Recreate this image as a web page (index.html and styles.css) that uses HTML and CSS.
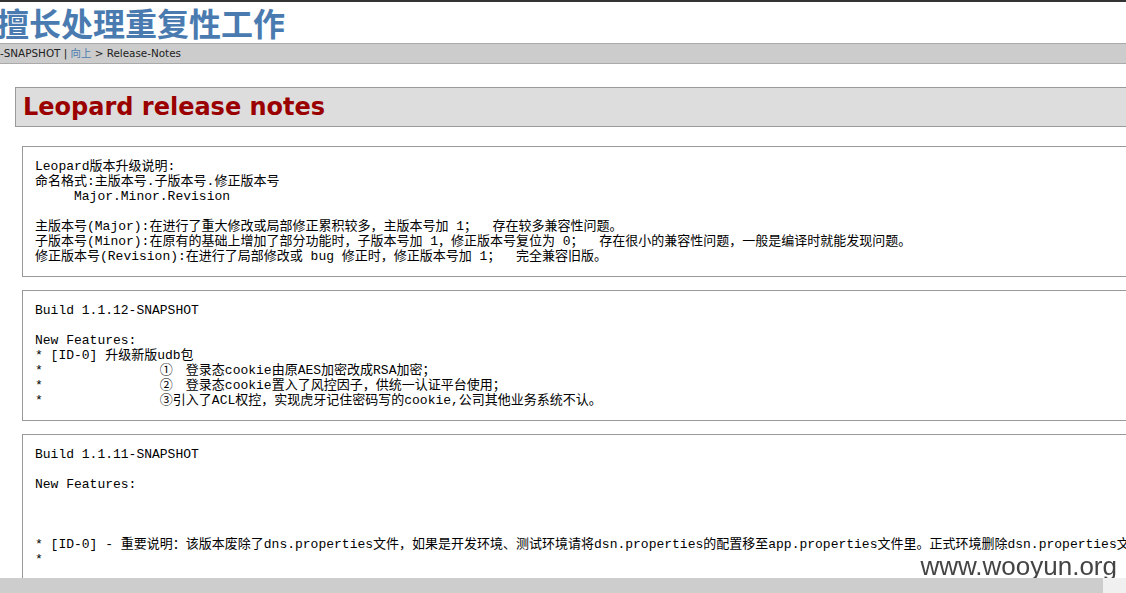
FILE: index.html
```html
<!DOCTYPE html>
<html lang="zh">
<head>
<meta charset="utf-8">
<title>Leopard release notes</title>
<link rel="stylesheet" href="styles.css">
</head>
<body>
<div class="page">
  <div class="topbar"></div>
  <h1 class="site-title">擅长处理重复性工作</h1>
  <div class="crumb">-SNAPSHOT | <a href="#">向上</a> &gt; Release-Notes</div>
  <div class="content">
    <div class="title-box"><h2>Leopard release notes</h2></div>
    <pre class="note">Leopard版本升级说明:
命名格式:主版本号.子版本号.修正版本号
     Major.Minor.Revision

主版本号(Major):在进行了重大修改或局部修正累积较多，主版本号加 1；  存在较多兼容性问题。
子版本号(Minor):在原有的基础上增加了部分功能时，子版本号加 1，修正版本号复位为 0；  存在很小的兼容性问题，一般是编译时就能发现问题。
修正版本号(Revision):在进行了局部修改或 bug 修正时，修正版本号加 1；  完全兼容旧版。</pre>
    <pre class="note">Build 1.1.12-SNAPSHOT

New Features:
* [ID-0] 升级新版udb包
*		①　登录态cookie由原AES加密改成RSA加密；
*		②　登录态cookie置入了风控因子，供统一认证平台使用；
*		③引入了ACL权控，实现虎牙记住密码写的cookie,公司其他业务系统不认。</pre>
    <pre class="note">Build 1.1.11-SNAPSHOT

New Features:



* [ID-0] - 重要说明：该版本废除了dns.properties文件，如果是开发环境、测试环境请将dsn.properties的配置移至app.properties文件里。正式环境删除dsn.properties文件。
*
</pre>
  </div>
</div>
<div class="watermark">www.wooyun.org</div>
<div class="hscroll"><div class="hthumb"></div></div>
</body>
</html>
```
FILE: styles.css
```css
html, body {
  margin: 0;
  padding: 0;
  overflow: hidden;
  background: #fff;
}
.page {
  width: 1600px;
  font-family: "DejaVu Sans", Verdana, "Noto Sans CJK SC", sans-serif;
}
.topbar {
  height: 2px;
  background: #333;
}
.site-title {
  margin: 0;
  height: 41px;
  line-height: 41px;
  font-family: "Noto Sans CJK SC", sans-serif;
  font-size: 32px;
  font-weight: bold;
  color: #4a7bb0;
  text-indent: -3px;
}
.crumb {
  height: 19px;
  line-height: 19px;
  background: #ccc;
  border-top: 1px solid #aaa;
  border-bottom: 1px solid #aaa;
  font-size: 10.4px;
  color: #222;
}
.crumb a {
  color: #4a7bb0;
  text-decoration: none;
}
.content {
  padding: 23px 0 0 15px;
}
.title-box {
  background: #ddd;
  border: 1px solid #999;
  height: 38px;
  padding-left: 7px;
  display: flex;
  align-items: center;
}
.title-box h2 {
  margin: 0;
  font-family: "DejaVu Sans", Verdana, sans-serif;
  font-size: 24px;
  font-weight: bold;
  color: #9b0000;
}
.note {
  margin: 19px 0 0 7px;
  border: 1px solid #999;
  padding: 12px 12px 12px;
  font-family: "Liberation Mono", "Noto Sans CJK SC", monospace;
  font-size: 13px;
  line-height: 15px;
  color: #000;
  tab-size: 8;
  white-space: pre;
}
.note + .note {
  margin-top: 13px;
}
.watermark {
  position: fixed;
  right: 9px;
  bottom: 13px;
  font-family: "Liberation Sans", Arial, sans-serif;
  font-size: 26px;
  line-height: 28px;
  color: #444;
}
.hscroll {
  position: fixed;
  left: 0;
  right: 0;
  bottom: 0;
  height: 15px;
  background: #f0f0f0;
}
.hthumb {
  width: 1103px;
  height: 15px;
  background: #cdcdcd;
}
```
